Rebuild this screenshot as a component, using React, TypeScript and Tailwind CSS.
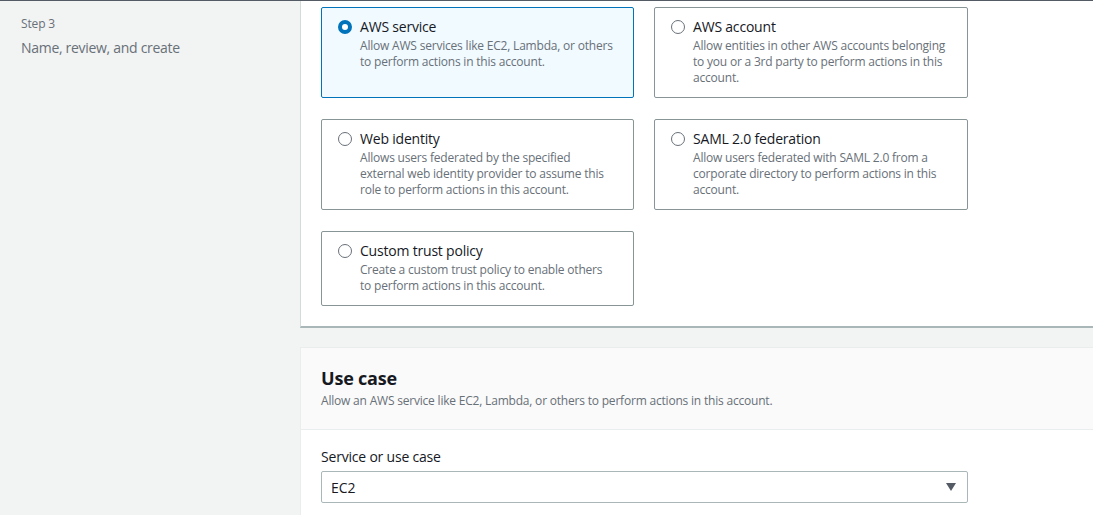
import React, { useState } from 'react';

const FONT = '"Open Sans", "Noto Sans", Arial, sans-serif';

const TRUST_TYPES = [
  { id: 'service', title: 'AWS service', desc: 'Allow AWS services like EC2, Lambda, or others to perform actions in this account.' },
  { id: 'account', title: 'AWS account', desc: 'Allow entities in other AWS accounts belonging to you or a 3rd party to perform actions in this account.' },
  { id: 'web', title: 'Web identity', desc: 'Allows users federated by the specified external web identity provider to assume this role to perform actions in this account.' },
  { id: 'saml', title: 'SAML 2.0 federation', desc: 'Allow users federated with SAML 2.0 from a corporate directory to perform actions in this account.' },
  { id: 'custom', title: 'Custom trust policy', desc: 'Create a custom trust policy to enable others to perform actions in this account.' },
];

const Radio = ({ checked }: { checked: boolean }) =>
  checked ? (
    <span className="mt-[3px] block w-[14px] h-[14px] shrink-0 rounded-full border-[4px] border-[#0073bb] bg-white" />
  ) : (
    <span className="mt-[3px] block w-[14px] h-[14px] shrink-0 rounded-full border-[1.5px] border-[#687078] bg-white" />
  );

export default function App() {
  const [selected, setSelected] = useState('service');

  return (
    <div className="w-full h-[515px] overflow-hidden bg-[#f2f3f3] border-t border-[#545b64] flex" style={{ fontFamily: FONT }}>
      {/* Wizard steps */}
      <div className="w-[300px] shrink-0 px-[21px] pt-[15px]">
        <div className="text-[12px] leading-[16px] text-[#687078] tracking-[-0.15px]">Step 3</div>
        <div className="mt-[6px] text-[14px] leading-[20px] text-[#687078] tracking-[-0.3px]">Name, review, and create</div>
      </div>

      <div className="flex-1 flex flex-col">
        {/* Trusted entity type */}
        <div className="bg-white border-l border-[#d5dbdb] border-b-2 border-b-[#aab7b8] pl-[20px] pt-[6px] pb-[20px]">
          <div className="grid grid-cols-[313px_314px] gap-x-[20px] gap-y-[21px]">
            {TRUST_TYPES.map((t) => {
              const on = selected === t.id;
              return (
                <div
                  key={t.id}
                  onClick={() => setSelected(t.id)}
                  className={`flex gap-[8px] border rounded-[2px] pl-[16px] pr-[18px] pt-[9px] pb-[11px] cursor-pointer ${
                    on ? 'bg-[#f1faff] border-[#0073bb]' : 'bg-white border-[#879596]'
                  }`}
                >
                  <Radio checked={on} />
                  <div>
                    <div className="text-[14px] leading-[20px] text-[#16191f] tracking-[-0.2px]">{t.title}</div>
                    <div className="text-[12px] leading-[16px] text-[#687078] mt-[1px] tracking-[-0.2px]">{t.desc}</div>
                  </div>
                </div>
              );
            })}
          </div>
        </div>

        {/* Use case */}
        <div className="mt-[19px] flex-1 border-l border-t border-[#eaeded] bg-white">
          <div className="bg-[#fafafa] border-b border-[#eaeded] px-[20px] pt-[19px] pb-[20px]">
            <h2 className="text-[18px] leading-[22px] font-bold text-[#16191f] tracking-[-0.2px]">Use case</h2>
            <p className="mt-[4px] text-[12px] leading-[16px] text-[#687078] tracking-[-0.2px]">
              Allow an AWS service like EC2, Lambda, or others to perform actions in this account.
            </p>
          </div>
          <div className="px-[20px] pt-[17px]">
            <div className="text-[14px] leading-[20px] text-[#16191f] tracking-[-0.2px]">Service or use case</div>
            <div className="mt-[4px] w-[647px] h-[32px] border border-[#aab7b8] rounded-[2px] flex items-center justify-between pl-[9px] pr-[11px]">
              <span className="text-[14px] text-[#16191f]">EC2</span>
              <svg width="10" height="8" viewBox="0 0 10 8">
                <path d="M0 0h10L5 8z" fill="#545b64" />
              </svg>
            </div>
          </div>
        </div>
      </div>
    </div>
  );
}
